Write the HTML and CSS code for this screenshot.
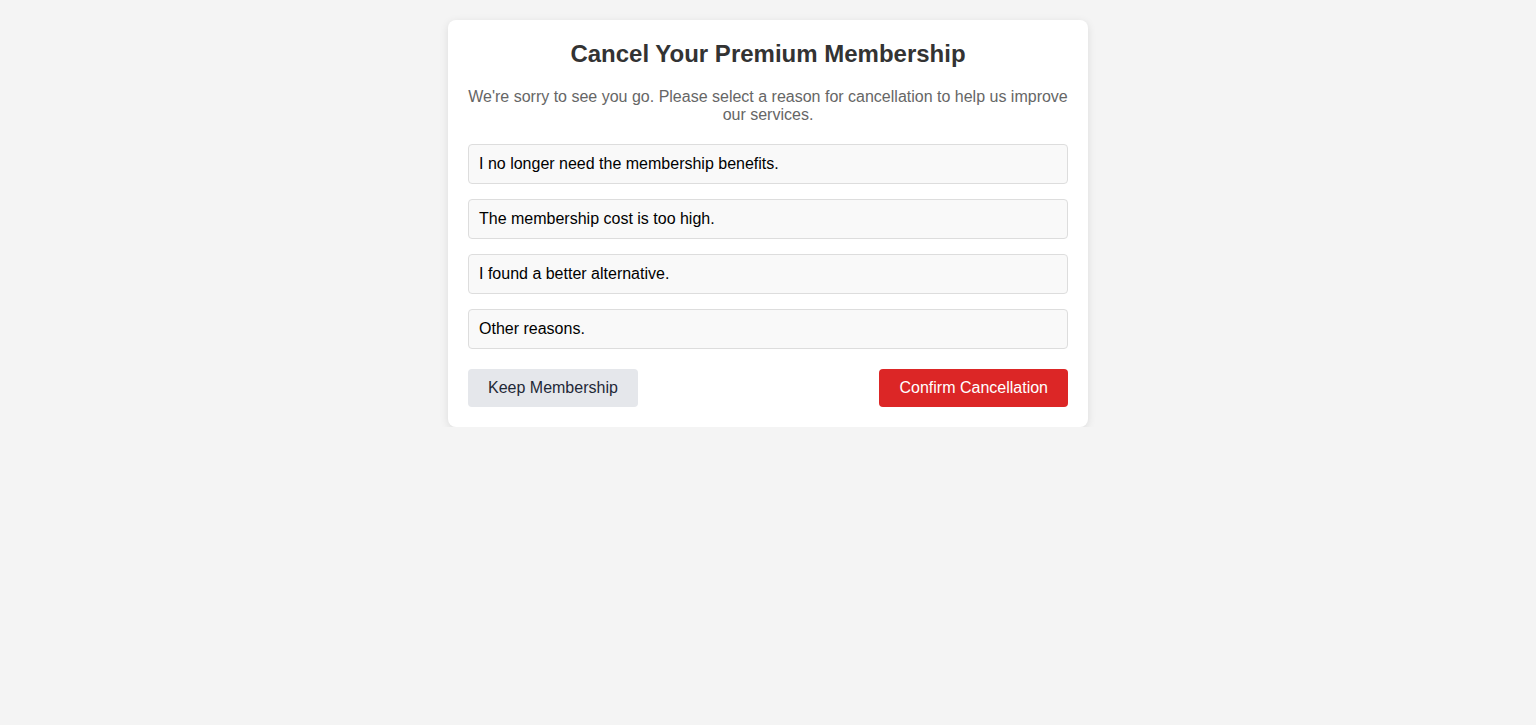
FILE: index.html
```html
<!DOCTYPE html>
<html lang="en">
<head>
<meta charset="utf-8">
<title>Cancel Membership</title>
<link rel="stylesheet" href="styles.css">
</head>
<body>
<div class="card">
  <h1 class="title">Cancel Your Premium Membership</h1>
  <p class="subtitle">We're sorry to see you go. Please select a reason for cancellation to help us improve our services.</p>
  <div class="options">
    <div class="option">I no longer need the membership benefits.</div>
    <div class="option">The membership cost is too high.</div>
    <div class="option">I found a better alternative.</div>
    <div class="option">Other reasons.</div>
  </div>
  <div class="actions">
    <button class="btn btn-keep">Keep Membership</button>
    <button class="btn btn-confirm">Confirm Cancellation</button>
  </div>
</div>
</body>
</html>
```
FILE: styles.css
```css
html, body {
  margin: 0;
  padding: 0;
}
body {
  background: #f4f4f4;
  font-family: "Liberation Sans", Arial, sans-serif;
  padding-top: 20px;
}
.card {
  width: 600px;
  margin: 0 auto;
  background: #fff;
  border-radius: 8px;
  padding: 20px;
  box-shadow: 0 2px 8px rgba(0, 0, 0, 0.1);
}
.title {
  margin: 0 0 20px;
  font-size: 24px;
  font-weight: bold;
  color: #333;
  text-align: center;
}
.subtitle {
  margin: 0 0 20px;
  font-size: 16px;
  color: #666;
  text-align: center;
}
.options {
  display: flex;
  flex-direction: column;
  gap: 15px;
}
.option {
  padding: 10px;
  border: 1px solid #ddd;
  border-radius: 4px;
  background: #f9f9f9;
  font-size: 16px;
  color: #000;
}
.actions {
  display: flex;
  justify-content: space-between;
  margin-top: 20px;
}
.btn {
  border: none;
  border-radius: 4px;
  padding: 10px 20px;
  font-family: "Liberation Sans", Arial, sans-serif;
  font-size: 16px;
  line-height: normal;
}
.btn-keep {
  background: #e5e7eb;
  color: #1f2937;
}
.btn-confirm {
  background: #dc2626;
  color: #fff;
}
```
